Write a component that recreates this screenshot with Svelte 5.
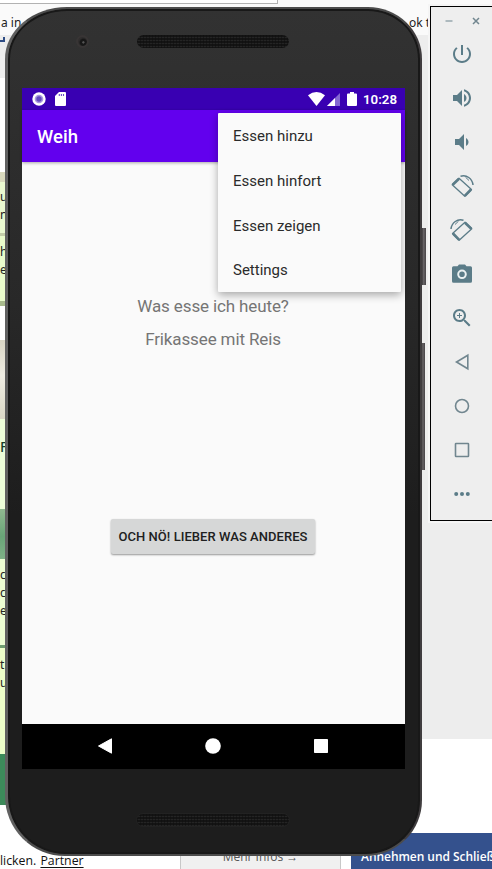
<script>
  const strips = [
    { h: 56, bg: 'transparent', pad: 14, lines: [] },
    { h: 22, bg: '#eeeeee', pad: 0, lines: [] },
    { h: 94, bg: '#ffffff', pad: 51, lines: [] },
    { h: 10, bg: '#d9d9bd', pad: 0, lines: [] },
    { h: 51, bg: '#e9f8cf', pad: 6, lines: ['u', 'n'] },
    { h: 3, bg: '#c3cda8', pad: 0, lines: [] },
    { h: 65, bg: '#e9fbcb', pad: 7, lines: ['h', 'e'] },
    { h: 5, bg: '#a9bb8d', pad: 0, lines: [] },
    { h: 34, bg: '#ffffff', pad: 0, lines: [] },
    { h: 79, bg: 'linear-gradient(#d8d5c4, #eeece2 45%, #d9d6c5)', pad: 0, lines: [] },
    { h: 90, bg: '#ecfdd8', pad: 19, lines: ['F'], big: true },
    { h: 50, bg: 'linear-gradient(#90b890, #69a477 55%, #7fb187)', pad: 0, lines: [] },
    { h: 86, bg: '#ecfdd2', pad: 7, lines: ['c', 'c', 'e'] },
    { h: 3, bg: '#6f9d70', pad: 0, lines: [] },
    { h: 106, bg: '#edfec9', pad: 8, lines: ['t', 'u'] },
    { h: 51, bg: '#3c8a5a', pad: 0, lines: [] }
  ];
  const menu = ['Essen hinzu', 'Essen hinfort', 'Essen zeigen', 'Settings'];
  const tools = ['power', 'volume-up', 'volume-down', 'rotate-left', 'rotate-right', 'camera', 'zoom', 'back', 'home', 'overview', 'more'];
</script>

<div class="desktop">
  <div class="page">
    <div class="search"></div>
    <div class="tabs"><span>a in</span><span>ok t</span></div>
    <div class="strips">
      {#each strips as s}
        <div class="strip" class:big={s.big} style="height:{s.h}px;padding-top:{s.pad}px;background:{s.bg}">
          {#each s.lines as l}<div>{l}</div>{/each}
        </div>
      {/each}
    </div>
    <div class="logo"></div>
    <div class="cookies">
      <div class="note"><span>licken.</span> <u>Partner</u></div>
      <div class="info">Mehr Infos →</div>
      <div class="accept">Annehmen und Schließ</div>
    </div>
  </div>

  <div class="key power-key"></div>
  <div class="key volume-key"></div>
  <div class="phone">
    <div class="bezel top">
      <div class="lens"></div>
      <div class="grille"></div>
    </div>
    <div class="screen">
      <div class="status">
        <svg width="14" height="14" viewBox="0 0 14 14"><circle cx="7" cy="7" r="6.700" fill="#fff"/><circle cx="7" cy="7" r="4.300" fill="#a999e0"/><circle cx="7" cy="7" r="2.700" fill="#624abf"/></svg>
        <svg class="sd" width="11" height="14" viewBox="0 0 11 14"><path d="M4 0h6q1 0 1 1v12q0 1-1 1H1q-1 0-1-1V4z" fill="#fff"/><path d="M4.300 2v2M6.400 2v2M8.500 2v2" stroke="#6b46c9" stroke-width="1.100"/></svg>
        <span class="spacer"></span>
        <svg width="17" height="14" viewBox="0 0 17 14"><path d="M0 3.200Q8.500-3 17 3.200L8.500 14z" fill="#fff"/></svg>
        <svg class="cell" width="13" height="13" viewBox="0 0 13 13"><path d="M13 0v13H0z" fill="#8468d2"/><path d="M8 5v8H0z" fill="#fff"/></svg>
        <svg class="battery" width="10" height="14" viewBox="0 0 10 14"><path d="M3 0h4v1.500h2q1 0 1 1V13q0 1-1 1H1q-1 0-1-1V2.500q0-1 1-1h2z" fill="#fff"/></svg>
        <b>10:28</b>
      </div>
      <div class="appbar">Weih</div>
      <div class="content">
        <p class="q">Was esse ich heute?</p>
        <p class="a">Frikassee mit Reis</p>
        <button>OCH NÖ! LIEBER WAS ANDERES</button>
      </div>
      <div class="nav">
        <svg width="14" height="16" viewBox="0 0 14 16"><path d="M13.500.8v14.400L.5 8z" fill="#fff" stroke="#fff" stroke-linejoin="round"/></svg>
        <svg width="16" height="16" viewBox="0 0 16 16"><circle cx="8" cy="8" r="7.800" fill="#fff"/></svg>
        <svg width="14" height="14" viewBox="0 0 14 14"><rect width="14" height="14" rx=".7" fill="#fff"/></svg>
      </div>
      <div class="menu">
        {#each menu as item}<div>{item}</div>{/each}
      </div>
    </div>
    <div class="bezel bottom"><div class="grille"></div></div>
  </div>

  <div class="toolbar">
    <div class="winbtns">
      <svg width="8" height="10" viewBox="0 0 8 10"><path d="M.5 5h7" stroke="#83979f" stroke-width="1.200"/></svg>
      <svg width="8" height="8" viewBox="0 0 8 8"><path d="M1 1l6 6M7 1L1 7" stroke="#71868f" stroke-width="1.500"/></svg>
    </div>
    {#each tools as t}
      <div class="tool">
        <svg width="24" height="24" viewBox="0 0 24 24" fill="#5b7c88">
          {#if t === 'power'}
            <path d="M13 3h-2v10h2V3zm4.830 2.170l-1.420 1.420C17.990 7.860 19 9.810 19 12c0 3.870-3.130 7-7 7s-7-3.130-7-7c0-2.190 1.010-4.140 2.580-5.420L6.170 5.170C4.230 6.820 3 9.260 3 12c0 4.970 4.030 9 9 9s9-4.030 9-9c0-2.740-1.230-5.180-3.170-6.830z"/>
          {:else if t === 'volume-up'}
            <path d="M3 9v6h4l5 5V4L7 9H3zm13.500 3c0-1.770-1.020-3.290-2.500-4.030v8.050c1.480-.73 2.500-2.250 2.500-4.020zM14 3.230v2.060c2.890.86 5 3.540 5 6.710s-2.110 5.850-5 6.710v2.060c4.010-.91 7-4.490 7-8.770s-2.990-7.860-7-8.770z"/>
          {:else if t === 'volume-down'}
            <path d="M18.500 12c0-1.770-1.020-3.290-2.500-4.030v8.050c1.480-.73 2.500-2.250 2.500-4.020zM5 9v6h4l5 5V4L9 9H5z"/>
          {:else if t === 'rotate-left' || t === 'rotate-right'}
            <g transform={t === 'rotate-right' ? 'translate(24 0) scale(-1 1)' : undefined} fill="none" stroke="#5b7c88" stroke-linejoin="round">
              <path d="M9 4.300L21.500 15.500 14.800 22.300 2.200 10.800z" stroke-width="1.300"/>
              <path d="M2.700 10.800L9 4.800M14.800 21.800L21 15.500" stroke-width="2.600"/>
              <path d="M10.500 2.300C16.500.6 22.300 4.300 23 11" stroke-width="1.500"/>
              <path d="M15.500 3.200l3.500 3.300" stroke-width="1"/>
            </g>
          {:else if t === 'camera'}
            <path d="M9 2.500L7.500 4.300H3.500q-1.500 0-1.500 1.500v13.400q0 1.500 1.500 1.500h17q1.500 0 1.500-1.500V5.800q0-1.500-1.500-1.500h-4L15 2.500z"/><circle cx="12" cy="12.300" r="3.800" fill="none" stroke="#eaf1f2" stroke-width="2"/>
          {:else if t === 'zoom'}
            <path d="M15.500 14h-.79l-.28-.27C15.410 12.590 16 11.110 16 9.500 16 5.910 13.090 3 9.500 3S3 5.910 3 9.500 5.910 16 9.500 16c1.610 0 3.090-.59 4.230-1.570l.27.28v.79l5 4.990L20.490 19l-4.990-5zm-6 0C7.010 14 5 11.990 5 9.500S7.010 5 9.500 5 14 7.010 14 9.500 11.990 14 9.500 14zM12 10h-2v2H9v-2H7V9h2V7h1v2h2v1z"/>
          {:else if t === 'back'}
            <path d="M17.800 5.200v13.600L6.500 12z" fill="none" stroke="#71868f" stroke-width="1.600"/>
          {:else if t === 'home'}
            <circle cx="12" cy="12" r="6.500" fill="none" stroke="#71868f" stroke-width="1.600"/>
          {:else if t === 'overview'}
            <rect x="5.500" y="5.500" width="13" height="13" rx=".5" fill="none" stroke="#71868f" stroke-width="1.600"/>
          {:else}
            <circle cx="6.200" cy="12" r="2"/><circle cx="12" cy="12" r="2"/><circle cx="17.800" cy="12" r="2"/>
          {/if}
        </svg>
      </div>
    {/each}
  </div>
</div>

<style>
  :global(body) { margin: 0; }
  .desktop { position: relative; width: 492px; height: 869px; overflow: hidden; background: #fff; font-family: Roboto, sans-serif; }
  .page { position: absolute; inset: 0; background: linear-gradient(#fafafa 35px, #ededed 35px, #ededed 739px, #fff 739px); font-family: "Noto Sans", sans-serif; color: #222; }
  .search { position: absolute; left: 0; top: -4px; width: 277px; height: 6px; background: #fff; border: 1px solid #b2b2b2; border-left: 0; }
  .tabs { position: absolute; top: 14px; left: 1px; width: 434px; display: flex; justify-content: space-between; font-size: 12px; line-height: 18px; white-space: pre; }
  .tabs span:last-child { margin-right: 5px; }
  .strips { position: absolute; left: 0; top: 0; width: 30px; display: flex; flex-direction: column; }
  .strip { box-sizing: border-box; font-size: 12px; line-height: 18px; flex: none; }
  .strip.big { font-size: 14px; color: #123c28; font-weight: 500; }
  .logo { position: absolute; left: 0; top: 37px; width: 3px; height: 3px; border-right: 2px solid #2f4d85; border-bottom: 2px solid #2f4d85; }
  .cookies { position: absolute; left: 0; right: 0; bottom: 0; height: 36px; display: flex; align-items: flex-end; font-family: "Open Sans", sans-serif; }
  .note { width: 180px; height: 17px; line-height: 17px; font-size: 12.300px; background: #fff; color: #111; white-space: nowrap; }
  .note u { text-underline-offset: 2px; margin-left: 1px; }
  .info { box-sizing: border-box; width: 161px; height: 24px; line-height: 24px; border: solid #c8c8c8; border-width: 0 1px; background: #f0f0f0; text-align: center; font-size: 12px; color: #555; }
  .accept { box-sizing: border-box; margin-left: 10px; width: 141px; height: 36px; background: #34518d; color: #fff; font-size: 12px; font-weight: 600; line-height: 48px; padding-left: 10px; white-space: nowrap; letter-spacing: -.05px; }
  .key { position: absolute; left: 418px; width: 8px; background: linear-gradient(90deg, #272527 40%, #686467 70%, #464346); }
  .power-key { top: 228px; height: 57px; }
  .volume-key { top: 343px; height: 127px; width: 7px; }
  .phone { position: absolute; box-sizing: border-box; left: 5px; top: 7px; width: 417px; height: 849px; border: 2px solid #4c4c4c; border-left: 3px solid #606060; border-right-color: #403d3f; border-radius: 62px 54px 56px 60px / 52px 52px 56px 60px; background: linear-gradient(#323232, #282828 35%, #1d1d1d 60%, #1d1d1d); box-shadow: inset 0 0 0 2px #181818; display: flex; flex-direction: column; }
  .bezel { flex: none; }
  .bezel.top { height: 79px; display: flex; align-items: flex-start; }
  .lens { margin: 26px 0 0 68px; width: 9px; height: 9px; border: 2px solid #383535; border-radius: 50%; background: radial-gradient(circle at 60% 60%, #555 0 10%, #171717 20% 40%, #302e2e 60%); }
  .grille { margin: 26px 0 0 48px; width: 152px; height: 13px; border-radius: 7px; background: repeating-linear-gradient(90deg, #0e0e0e88 0 1px, transparent 1px 3px), repeating-linear-gradient(#141414 0 2px, #242424 2px 3px); }
  .bezel.bottom .grille { margin: 45px 0 0 129px; height: 12px; box-shadow: 0 0 0 1px #222; }
  .screen { position: relative; flex: none; margin-left: 14px; width: 383px; height: 681px; background: #fafafa; display: flex; flex-direction: column; }
  .status { box-sizing: border-box; height: 22px; flex: none; background: #3900b2; color: #fff; display: flex; align-items: center; padding: 0 8px 0 10px; }
  .status .sd { margin-left: 9px; }
  .spacer { flex: 1; }
  .cell { margin-left: 2px; }
  .battery { margin: 0 6px 0 7px; }
  .status b { font-size: 13.300px; font-weight: 600; }
  .appbar { height: 52px; flex: none; box-sizing: border-box; background: #6200ee; color: #fff; font-size: 18.500px; font-weight: 500; line-height: 54px; padding-left: 15px; box-shadow: 0 1px 3px #0005; }
  .content { flex: 1; display: flex; flex-direction: column; align-items: center; color: #757575; font-size: 17px; letter-spacing: -.13px; }
  p { margin: 0 1px 0 0; line-height: 20px; }
  .q { margin-top: 134px; }
  .a { margin-top: 13px; }
  button { margin: 170px 1px 0 0; width: 204px; height: 35px; padding: 0; border: 0; border-radius: 2px; background: #d6d7d7; color: #202020; font: 500 13px Roboto, sans-serif; letter-spacing: .05px; white-space: nowrap; box-shadow: 0 1px 2px #0006; }
  .nav { height: 45px; flex: none; background: #000; display: flex; align-items: center; justify-content: space-between; padding: 0 77px 1px 76px; box-sizing: border-box; }
  .menu { position: absolute; left: 196px; top: 25px; width: 183px; height: 179px; background: #fafafa; box-shadow: 0 3px 9px #0005; font-size: 15px; color: #2b2b2b; border-radius: 1px; }
  .menu div { height: 44.800px; line-height: 47px; padding-left: 15px; }
  .toolbar { position: absolute; box-sizing: border-box; left: 430px; top: 6px; width: 64px; height: 515px; border: 1px solid #000; background: #eee; display: flex; flex-direction: column; align-items: center; box-shadow: 0 0 0 2px #f5f5f5; }
  .winbtns { height: 25px; flex: none; width: 100%; box-sizing: border-box; display: flex; justify-content: space-between; align-items: center; padding: 3px 13px 0 14px; }
  .tool { height: 44px; flex: none; display: flex; align-items: center; }
</style>
